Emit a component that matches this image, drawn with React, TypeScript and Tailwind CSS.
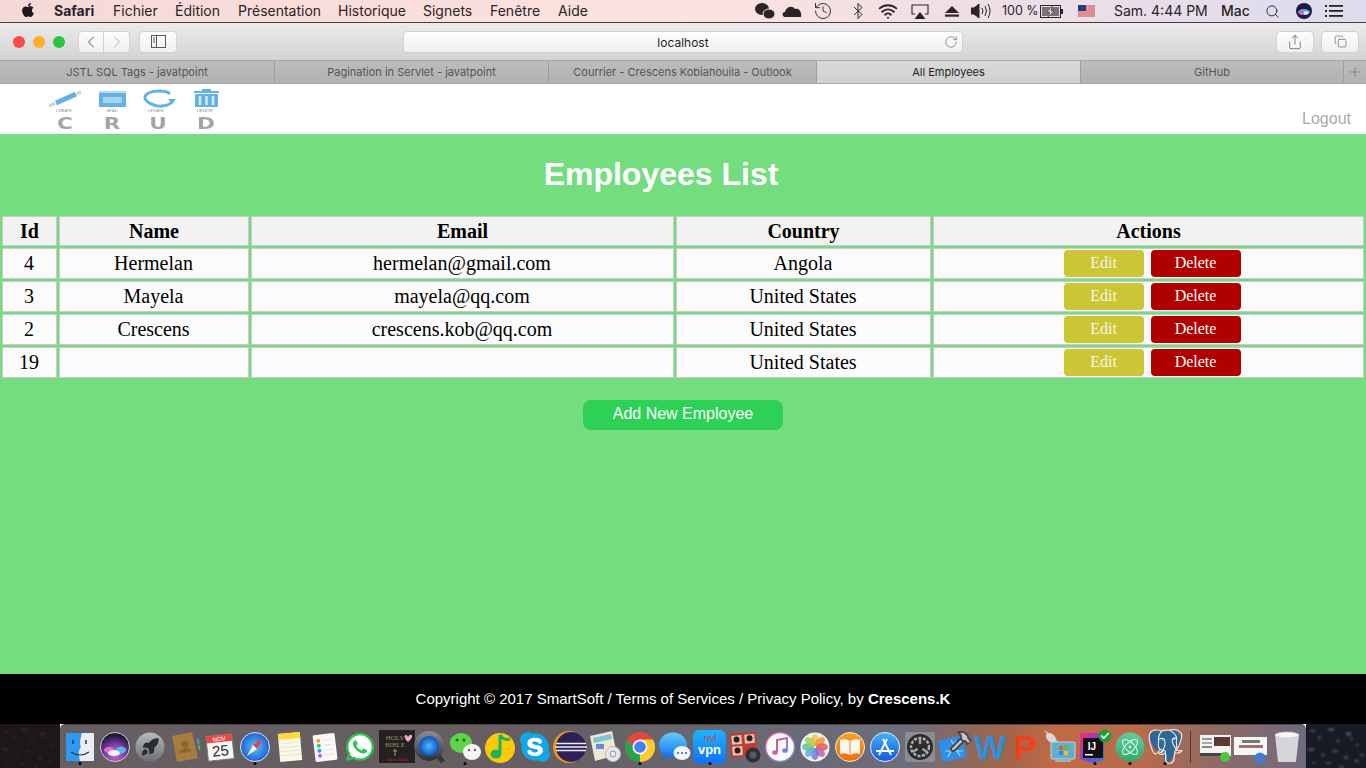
import React from "react";
import { FaApple, FaWhatsapp, FaSkype } from "react-icons/fa";
import { SiPostgresql } from "react-icons/si";
import { ChevronLeft, ChevronRight, RotateCw, Share, Copy, Plus, Search, Wifi, History, Check, Rocket, Hammer, Atom } from "lucide-react";

const menus: [string, string][] = [
  ["Safari", "w-[59px] font-bold"],
  ["Fichier", "w-[62px]"],
  ["Édition", "w-[63px]"],
  ["Présentation", "w-[100px]"],
  ["Historique", "w-[85px]"],
  ["Signets", "w-[67px]"],
  ["Fenêtre", "w-[68px]"],
  ["Aide", "w-[40px]"],
];

const tabs: [string, string, boolean][] = [
  ["JSTL SQL Tags - javatpoint", "w-[275px]", false],
  ["Pagination in Servlet - javatpoint", "w-[274px]", false],
  ["Courrier - Crescens Kobiahouila - Outlook", "w-[268px]", false],
  ["All Employees", "w-[264px]", true],
  ["GitHub", "w-[263px]", false],
];

const rows: [string, string, string, string][] = [
  ["4", "Hermelan", "hermelan@gmail.com", "Angola"],
  ["3", "Mayela", "mayela@qq.com", "United States"],
  ["2", "Crescens", "crescens.kob@qq.com", "United States"],
  ["19", "", "", "United States"],
];

function Logo() {
  const blue = "#62b3e3";
  const letters: [string, number][] = [["C", 65], ["R", 112], ["U", 158], ["D", 206]];
  return (
    <svg width="180" height="50" viewBox="46 84 180 50" className="blur-[0.5px]">
      <path d="M56 103 L76 94" stroke={blue} strokeWidth="5" />
      <path d="M49 106 L55 103.500 M77 93.500 L81 92" stroke="#cfd3d6" strokeWidth="3.500" />
      <rect x="99" y="92" width="27" height="15" fill={blue} />
      <rect x="99" y="91" width="27" height="2" fill="#b8dcf2" />
      <rect x="103" y="97" width="19" height="6" fill="#a7d4ef" />
      <path d="M170 94 C166 90 150 90 146 95 C141 101 155 107 162 106 C168 105.500 172 103 173 100" fill="none" stroke={blue} strokeWidth="3" />
      <path d="M168 99 L176 99 L172 104 Z" fill={blue} />
      <rect x="194" y="91" width="25" height="2" fill={blue} />
      <rect x="202" y="89" width="9" height="2" fill={blue} />
      <path d="M195 94 H218 V107 H195 Z" fill={blue} />
      <path d="M200 96 V105 M206.500 96 V105 M213 96 V105" stroke="#d5ebf8" strokeWidth="2.500" />
      <g fontFamily="'Liberation Sans', sans-serif" fontSize="4" fill="#8a8a8a" textAnchor="middle">
        <text x="64" y="112">CREATE</text>
        <text x="112" y="112">READ</text>
        <text x="156" y="112">UPDATE</text>
        <text x="205" y="112">DELETE</text>
      </g>
      <g fontFamily="'DejaVu Sans', sans-serif" fontSize="16" fontWeight="700" fill="#a4a4a4" textAnchor="middle">
        {letters.map(([l, x]) => (
          <text key={l} transform={`translate(${x} 129) scale(1.35 1)`}>{l}</text>
        ))}
      </g>
    </svg>
  );
}

function MenuBar() {
  return (
    <div className="flex h-[22px] items-center bg-gradient-to-r from-[#f5d9d8] via-[#fbe2df] to-[#dddcee] pl-[21px] pr-[23px] text-[14px] leading-none text-[#2b2226] font-['Inter',sans-serif]">
      <FaApple className="mb-[2px] h-[16px] w-[14px] text-[#1c1719]" />
      <div className="ml-[19px] flex">
        {menus.map(([m, c]) => (
          <span key={m} className={c}>{m}</span>
        ))}
      </div>
      <div className="ml-auto flex items-center">
        <svg width="20" height="18" viewBox="0 0 20 18" fill="#2a2426">
          <ellipse cx="7" cy="7" rx="7" ry="6" />
          <ellipse cx="14" cy="12" rx="6" ry="5" stroke="#fbe0df" />
        </svg>
        <svg className="ml-[7px]" width="20" height="16" viewBox="0 0 20 14" fill="#2a2426">
          <path d="M3 13 C0 13 -0.500 8 3 8 C4 3 10 1 13 5 C17 4 20 8 19 13 Z" />
        </svg>
        <History className="ml-[11px] h-[20px] w-[20px] text-[#3a3336]" strokeWidth={1.200} />
        <svg className="ml-[20px]" width="10" height="18" viewBox="0 0 10 18" fill="none" stroke="#2a2426" strokeWidth="1">
          <path d="M1 5 L9 12.500 L5 16.500 V1.500 L9 5.500 L1 13" />
        </svg>
        <Wifi className="ml-[15px] h-[20px] w-[20px] text-[#2a2426]" strokeWidth={2.300} />
        <svg className="ml-[13px]" width="18" height="15" viewBox="0 0 18 15" fill="none">
          <path d="M4 10 H1 V1 H17 V10 H14" stroke="#2a2426" strokeWidth="1.100" />
          <path d="M3.500 15 L9 8 L14.500 15 Z" fill="#2a2426" />
        </svg>
        <svg className="ml-[16px]" width="14" height="12" viewBox="0 0 14 12" fill="#2a2426">
          <path d="M7 1 L14 8 H0 Z" />
          <rect y="9.500" width="14" height="2.200" />
        </svg>
        <svg className="ml-[12px]" width="21" height="16" viewBox="0 0 21 16" fill="none" stroke="#2a2426">
          <path d="M0 5 H3 L8 1 V15 L3 11 H0 Z" fill="#2a2426" />
          <path d="M11 5 Q13 8 11 11 M14 3 Q17 8 14 13 M17 1 Q21 8 17 15" />
        </svg>
        <span className="ml-[10px] w-[38px] whitespace-nowrap text-[12.500px]">100 %</span>
        <svg width="24" height="13" viewBox="0 0 24 13" fill="none">
          <rect x="0.500" y="0.500" width="20" height="12" stroke="#2a2426" />
          <rect x="21" y="4" width="2" height="5" fill="#2a2426" />
          <path d="M2 2 H19 V11 H2 Z" fill="#7a7274" />
          <path d="M12 1 L7 7 H10 L8 12 L14 6 H11 Z" fill="#fbe0df" stroke="#2a2426" strokeWidth="0.500" />
        </svg>
        <svg className="ml-[14px]" width="17" height="12" viewBox="0 0 17 12">
          <rect width="17" height="12" fill="#f4f0f0" />
          <path d="M0 1 H17 M0 3 H17 M0 5 H17 M0 7 H17 M0 9 H17 M0 11 H17" stroke="#c8283a" strokeWidth="1" />
          <rect width="8" height="6" fill="#2c3a7c" />
        </svg>
        <span className="ml-[19px] w-[107px]">Sam. 4:44 PM</span>
        <span className="w-[44px] font-medium">Mac</span>
        <Search className="h-[15px] w-[15px] text-[#2a2426]" strokeWidth={1.500} />
        <svg className="ml-[16px]" width="16" height="16" viewBox="0 0 16 16">
          <circle cx="8" cy="8" r="8" fill="#1e1a44" />
          <ellipse cx="8" cy="9" rx="6" ry="3" fill="#4fa8e8" />
          <ellipse cx="6" cy="10" rx="3" ry="2" fill="#d860c0" />
          <ellipse cx="10" cy="10" rx="2.500" ry="1.800" fill="#e6f4ff" />
        </svg>
        <svg className="ml-[13px]" width="18" height="12" viewBox="0 0 18 12" fill="#2a2426">
          <rect x="0" y="0" width="2" height="2" />
          <rect x="0" y="5" width="2" height="2" />
          <rect x="0" y="10" width="2" height="2" />
          <rect x="4" y="0" width="14" height="1.800" />
          <rect x="4" y="5" width="14" height="1.800" />
          <rect x="4" y="10" width="14" height="1.800" />
        </svg>
      </div>
    </div>
  );
}

function ToolBtn({ className, children }: { className: string; children: React.ReactNode }) {
  return (
    <div className={"flex h-[22px] items-center justify-center rounded-[4px] border border-[#d2d1d3] bg-gradient-to-b from-[#fdfdfd] to-[#f0f0f1] " + className}>
      {children}
    </div>
  );
}

function Toolbar() {
  return (
    <div className="flex h-[38px] items-center border-t border-[#57383a] bg-gradient-to-b from-[#ebebed] to-[#d3d2d5] pl-[13px] font-['Inter',sans-serif]">
      <div className="h-[12px] w-[12px] rounded-full bg-[#fc4a48]" />
      <div className="ml-[8px] h-[12px] w-[12px] rounded-full bg-[#fdb024]" />
      <div className="ml-[8px] h-[12px] w-[12px] rounded-full bg-[#29c33d]" />
      <div className="ml-[13px] flex">
        <ToolBtn className="w-[26px] rounded-r-none">
          <ChevronLeft className="h-[20px] w-[20px] text-[#5a5a5c]" strokeWidth={1.200} />
        </ToolBtn>
        <ToolBtn className="w-[26px] rounded-l-none border-l-0">
          <ChevronRight className="h-[20px] w-[20px] text-[#b5b5b7]" strokeWidth={1.200} />
        </ToolBtn>
      </div>
      <ToolBtn className="ml-[9px] w-[38px]">
        <svg width="15" height="13" viewBox="0 0 15 13" fill="none" stroke="#5a5a5c">
          <rect x="0.500" y="0.500" width="14" height="12" />
          <path d="M5.500 0.500 V12.500" />
          <path d="M2 3 H4 M2 5 H4 M2 7 H4" />
        </svg>
      </ToolBtn>
      <ToolBtn className="ml-[226px] w-[560px] relative">
        <span className="pt-[2px] text-[12px] leading-none text-[#1f1f1f]">localhost</span>
        <RotateCw className="absolute right-[4px] top-[3px] h-[14px] w-[14px] text-[#6e6e70]" strokeWidth={1.200} />
      </ToolBtn>
      <ToolBtn className="ml-[313px] w-[38px]">
        <Share className="h-[16px] w-[16px] text-[#5a5a5c]" strokeWidth={1.100} />
      </ToolBtn>
      <ToolBtn className="ml-[7px] w-[38px]">
        <Copy className="h-[13px] w-[13px] text-[#5a5a5c]" strokeWidth={1.200} />
      </ToolBtn>
    </div>
  );
}

function Tabs() {
  return (
    <div className="flex h-[24px] border-y border-y-[#a9a8a9] bg-gradient-to-b from-[#bdbcbd] to-[#b3b2b3] text-[11px] leading-none font-['Inter',sans-serif]">
      {tabs.map(([t, w, active]) => (
        <div
          key={t}
          className={
            "flex items-center justify-center border-r border-[#9f9e9f] " + w + " " +
            (active ? "bg-gradient-to-b from-[#d9d9d9] to-[#d0d0d0] text-[#222]" : "text-[#555]")
          }
        >
          {t}
        </div>
      ))}
      <div className="flex flex-1 items-center justify-center">
        <Plus className="h-[16px] w-[16px] text-[#6e6e6e]" strokeWidth={1} />
      </div>
    </div>
  );
}

function EmployeeTable() {
  const th = "h-[30px] border border-[#c9c9c9] bg-[#f2f2f2] text-[20px] font-bold p-0 leading-none text-black";
  const td = "h-[31px] border border-[#c9c9c9] bg-[#fbfbfb] text-[20px] pb-[2px] pr-[1px] text-center leading-none text-black";
  return (
    <table className="w-full table-fixed border-separate border-spacing-[2px] font-['Liberation_Serif',serif]">
      <colgroup>
        <col className="w-[55px]" />
        <col className="w-[190px]" />
        <col className="w-[423px]" />
        <col className="w-[255px]" />
        <col className="w-[431px]" />
      </colgroup>
      <thead>
        <tr>
          {["Id", "Name", "Email", "Country", "Actions"].map((h) => (
            <th key={h} className={th}>{h}</th>
          ))}
        </tr>
      </thead>
      <tbody>
        {rows.map((r) => (
          <tr key={r[0]}>
            {r.map((c, i) => (
              <td key={i} className={td}>{c}</td>
            ))}
            <td className="h-[31px] border border-[#c9c9c9] bg-[#fbfbfb] p-0 text-center leading-none">
              <div className="flex justify-center gap-[7px] pl-[8px] text-[16px] text-white">
                <span className="flex h-[27px] w-[80px] items-center justify-center rounded-[4px] bg-[#cbc636] pb-[2px] pr-[1px] text-[#f7f5e0]">Edit</span>
                <span className="flex h-[27px] w-[90px] items-center justify-center rounded-[4px] bg-[#b10000] pb-[2px] pr-[1px]">Delete</span>
              </div>
            </td>
          </tr>
        ))}
      </tbody>
    </table>
  );
}

/* ---------- dock icons ---------- */
const T = (p: React.SVGProps<SVGTextElement>) => <text fontFamily="'Liberation Sans', sans-serif" {...p} />;

const I = ({ children, defs }: { children: React.ReactNode; defs?: React.ReactNode }) => (
  <svg width="36" height="36" viewBox="0 0 36 36" className="overflow-visible">
    {defs && <defs>{defs}</defs>}
    {children}
  </svg>
);

const dockIcons: { k: string; dot?: boolean; el: React.ReactNode }[] = [
  { k: "finder", dot: true, el: (
    <I>
      <rect x="4" y="4" width="28" height="28" rx="1" fill="#2f9bf0" />
      <path d="M20 4 H31 a1 1 0 0 1 1 1 V31 a1 1 0 0 1 -1 1 H18 C16 24 17 20 19 18 C17 14 19 8 20 4 Z" fill="#e9eef3" />
      <path d="M11 11 V15 M24 11 V15" stroke="#20344c" strokeWidth="1.500" />
      <path d="M9 23 Q18 29 27 23" fill="none" stroke="#20344c" strokeWidth="1.200" />
    </I>
  )},
  { k: "siri", el: (
    <I defs={<radialGradient id="sr" cx="50%" cy="75%" r="70%"><stop offset="0" stopColor="#d86fc8" /><stop offset="0.5" stopColor="#7a3ca8" /><stop offset="1" stopColor="#15132c" /></radialGradient>}>
      <circle cx="18" cy="18" r="14.500" fill="url(#sr)" stroke="#d4d1d6" />
      <ellipse cx="12" cy="21" rx="5" ry="3" fill="#e86cc4" />
      <ellipse cx="24" cy="21" rx="5" ry="3.500" fill="#56b6ee" />
      <ellipse cx="17" cy="24" rx="6" ry="3" fill="#eef6fc" />
    </I>
  )},
  { k: "launchpad", el: (
    <I defs={<linearGradient id="lp" x1="0" y1="0" x2="0" y2="1"><stop offset="0" stopColor="#b4b9bc" /><stop offset="1" stopColor="#6c7175" /></linearGradient>}>
      <circle cx="18" cy="18" r="14.500" fill="url(#lp)" />
      <g transform="translate(8.500 8.500)"><Rocket width="19" height="19" fill="#2a2e31" stroke="#2a2e31" /></g>
    </I>
  )},
  { k: "contacts", el: (
    <I>
      <path d="M5 7 L25 3 L31 29 L10 33 Z" fill="#a87c3f" />
      <rect x="30" y="10" width="2" height="5" fill="#3fa0d8" transform="rotate(-12 31 12)" />
      <rect x="31" y="16" width="2" height="5" fill="#54b060" transform="rotate(-12 32 18)" />
      <circle cx="18" cy="15" r="3.500" fill="#8d6530" />
      <path d="M11 25 Q18 15 25 22" fill="#8d6530" />
    </I>
  )},
  { k: "calendar", el: (
    <I>
      <g transform="rotate(-6 18 18)">
        <rect x="5" y="6" width="26" height="25" fill="#f7f7f7" stroke="#777" />
        <rect x="5" y="6" width="26" height="7" fill="#e84a48" />
        <T x="18" y="12" fontSize="6" fill="#fff" textAnchor="middle">NOV</T>
        <T x="18" y="27" fontSize="15" fill="#2a2a2a" textAnchor="middle">25</T>
      </g>
    </I>
  )},
  { k: "safari", dot: true, el: (
    <I defs={<radialGradient id="sf"><stop offset="0" stopColor="#5fc0f7" /><stop offset="1" stopColor="#1c62d6" /></radialGradient>}>
      <circle cx="18" cy="18" r="14.500" fill="url(#sf)" stroke="#dfe3e8" />
      <path d="M26 9 L16 16 L20 20 Z" fill="#f0403a" />
      <path d="M10 27 L16 16 L20 20 Z" fill="#f4f4f4" />
    </I>
  )},
  { k: "notes", el: (
    <I>
      <g transform="rotate(-5 18 18)">
        <rect x="7" y="4" width="22" height="28" fill="#fbf8e8" />
        <rect x="7" y="4" width="22" height="6" fill="#fadb3c" />
        <path d="M7 14 H29 M7 18 H29 M7 22 H29 M7 26 H29" stroke="#e2dfc8" strokeWidth="0.700" />
      </g>
    </I>
  )},
  { k: "reminders", el: (
    <I>
      <g transform="rotate(-7 18 18)">
        <rect x="7" y="5" width="22" height="27" rx="1.500" fill="#f8f8f8" />
        <circle cx="12" cy="11" r="2" fill="#f5953a" />
        <circle cx="12" cy="16" r="2" fill="#32cf56" />
        <circle cx="12" cy="21" r="2" fill="#2a9cf0" />
        <circle cx="12" cy="26" r="2" fill="#c95ae0" />
        <path d="M16 11 H26 M16 16 H26 M16 21 H26 M16 26 H26" stroke="#dcdcdc" strokeWidth="0.700" />
      </g>
    </I>
  )},
  { k: "whatsapp", el: (
    <I>
      <circle cx="18" cy="17.500" r="13" fill="#fff" />
      <g transform="translate(2 2)"><FaWhatsapp size={32} color="#2fc34f" /></g>
    </I>
  )},
  { k: "bible", el: (
    <I>
      <g transform="translate(2 0)">
        <rect x="0" y="1" width="36" height="33" fill="#242122" />
        <text x="16" y="11" fontSize="7" fill="#9a8a60" textAnchor="middle" fontFamily="'Liberation Serif', serif">HOLY</text>
        <text x="16" y="18" fontSize="7" fill="#9a8a60" textAnchor="middle" fontFamily="'Liberation Serif', serif">BIBLE</text>
        <path d="M16 20 V27 M14 22 H18" stroke="#a89560" strokeWidth="1" />
        <text x="18" y="32" fontSize="4.500" fill="#c81c1c" textAnchor="middle" fontFamily="'Liberation Serif', serif">Sainte Bible</text>
        <path d="M29 8 C27 4 24 7 27 11 L29 13 L32 10 C35 6 31 4 29 8 Z" fill="#f2a8c8" />
      </g>
    </I>
  )},
  { k: "quicktime", el: (
    <I defs={<>
      <radialGradient id="qt"><stop offset="0" stopColor="#48bcfa" /><stop offset="1" stopColor="#1250c0" /></radialGradient>
      <linearGradient id="qr" x1="0" y1="0" x2="0" y2="1"><stop offset="0" stopColor="#8a9099" /><stop offset="1" stopColor="#2c3036" /></linearGradient>
    </>}>
      <path d="M22 22 L31 33" stroke="#33373d" strokeWidth="5" />
      <circle cx="17" cy="17" r="15" fill="url(#qr)" />
      <circle cx="17" cy="17" r="10" fill="url(#qt)" />
    </I>
  )},
  { k: "wechat", dot: true, el: (
    <I>
      <ellipse cx="14" cy="14" rx="11" ry="10" fill="#5fd34a" />
      <circle cx="10" cy="11" r="1.500" fill="#27631c" />
      <circle cx="17" cy="11" r="1.500" fill="#27631c" />
      <ellipse cx="25" cy="23" rx="9" ry="8" fill="#f4f4f4" />
      <circle cx="22" cy="21" r="1.200" fill="#666" />
      <circle cx="28" cy="21" r="1.200" fill="#666" />
    </I>
  )},
  { k: "qqmusic", el: (
    <I>
      <circle cx="18" cy="19" r="15" fill="#fbc908" />
      <path d="M18 6 V24" stroke="#1fb45c" strokeWidth="3" />
      <ellipse cx="14" cy="25" rx="5.500" ry="4.500" fill="#1fb45c" />
      <path d="M18 6 Q22 12 28 10" fill="none" stroke="#1fb45c" strokeWidth="3" />
    </I>
  )},
  { k: "skype", el: (
    <I>
      <circle cx="18" cy="18" r="11" fill="#fff" />
      <g transform="translate(1 1)"><FaSkype size={34} color="#11a6e4" /></g>
    </I>
  )},
  { k: "eclipse", el: (
    <I>
      <circle cx="17" cy="18" r="16" fill="#e8941c" />
      <circle cx="19" cy="18" r="15" fill="#2c2158" />
      <path d="M4 14.500 H34 M3 18 H35 M4 21.500 H34" stroke="#f0eef8" strokeWidth="1.500" />
    </I>
  )},
  { k: "maps", el: (
    <I>
      <path d="M3 7 L25 2 L30 26 L8 32 Z" fill="#ece6d2" />
      <path d="M6 9 L24 5 L25 10 L7 14 Z" fill="#7cc4d8" />
      <rect x="9" y="15" width="8" height="5" fill="#5d8fdf" />
      <circle cx="26" cy="25" r="7.500" fill="#e8e8ea" stroke="#bbb" />
      <circle cx="26" cy="25" r="3" fill="none" stroke="#999" />
    </I>
  )},
  { k: "chrome", dot: true, el: (
    <I>
      <circle cx="18" cy="18" r="15" fill="#de4a3c" />
      <path d="M18 18 L5 25.500 A15 15 0 0 0 18 33 Z" fill="#2ba24c" />
      <path d="M18 18 L18 33 A15 15 0 0 0 31 10.500 L18 10.500 Z" fill="#fbcb2e" />
      <path d="M18 18 L5 25.500 A15 15 0 0 1 5 10.500 L12 18 Z" fill="#2ba24c" />
      <circle cx="18" cy="18" r="7.500" fill="#f5f5f5" />
      <circle cx="18" cy="18" r="5.800" fill="#4a7ff0" />
    </I>
  )},
  { k: "messages", el: (
    <I defs={<linearGradient id="ms" x1="0" y1="0" x2="0" y2="1"><stop offset="0" stopColor="#62cdf9" /><stop offset="1" stopColor="#1672f0" /></linearGradient>}>
      <ellipse cx="16" cy="16" rx="14" ry="12.500" fill="url(#ms)" />
      <path d="M8 24 L5 31 L14 27 Z" fill="#1672f0" />
      <ellipse cx="25" cy="24" rx="8.500" ry="7" fill="#f2f4f8" />
      <circle cx="21" cy="24" r="1.100" fill="#3a6ea8" />
      <circle cx="25" cy="24" r="1.100" fill="#3a6ea8" />
      <circle cx="29" cy="24" r="1.100" fill="#3a6ea8" />
    </I>
  )},
  { k: "vpn", dot: true, el: (
    <I defs={<linearGradient id="vp" x1="0" y1="0" x2="0" y2="1"><stop offset="0" stopColor="#1eb4fa" /><stop offset="1" stopColor="#1470f5" /></linearGradient>}>
      <rect x="1" y="1" width="33" height="34" rx="6" fill="url(#vp)" />
      <text x="18" y="12" fontSize="10" fill="#d8394a" textAnchor="middle" fontStyle="italic" fontFamily="'Liberation Serif', serif">red</text>
      <T x="17.500" y="25" fontSize="13" fontWeight="700" fill="#fff" textAnchor="middle">vpn</T>
    </I>
  )},
  { k: "photobooth", el: (
    <I>
      <g transform="rotate(-5 15 15)">
        <rect x="3" y="4" width="27" height="24" fill="#c33a34" />
        <rect x="5" y="6" width="10" height="9" fill="#dcc6b8" />
        <rect x="18" y="6" width="10" height="9" fill="#dcc6b8" />
        <rect x="5" y="17" width="10" height="9" fill="#dcc6b8" />
        <circle cx="10" cy="10" r="3" fill="#2a2020" />
        <circle cx="23" cy="10" r="3" fill="#2a2020" />
        <circle cx="10" cy="21" r="3" fill="#2a2020" />
      </g>
      <circle cx="26" cy="26" r="7.500" fill="#2e2e34" />
      <circle cx="26" cy="26" r="3.500" fill="#545a66" />
    </I>
  )},
  { k: "itunes", el: (
    <I defs={<linearGradient id="it" x1="0" y1="0" x2="1" y2="1"><stop offset="0" stopColor="#f04a78" /><stop offset="1" stopColor="#5fa0f5" /></linearGradient>}>
      <circle cx="18" cy="18" r="14.500" fill="#fbf9fb" stroke="url(#it)" strokeWidth="1.500" />
      <path d="M15 23 V11 L25 9 V21" fill="none" stroke="url(#it)" strokeWidth="2" />
      <ellipse cx="13" cy="23.500" rx="2.800" ry="2.300" fill="#d85aa8" />
      <ellipse cx="23" cy="21.500" rx="2.800" ry="2.300" fill="#8a78dc" />
    </I>
  )},
  { k: "photos", el: (
    <I>
      <circle cx="18" cy="18" r="14.500" fill="#f2f2f2" />
      {["#f6c343", "#f39433", "#ea5a58", "#c65fb0", "#7f73d8", "#5cb0e0", "#5cc6a0", "#a5d052"].map((c, i) => (
        <ellipse key={c} cx="18" cy="11" rx="3.800" ry="6" fill={c} fillOpacity="0.850" transform={`rotate(${i * 45} 18 18)`} />
      ))}
    </I>
  )},
  { k: "ibooks", el: (
    <I defs={<linearGradient id="ib" x1="0" y1="0" x2="0" y2="1"><stop offset="0" stopColor="#fba51e" /><stop offset="1" stopColor="#ee6a0c" /></linearGradient>}>
      <circle cx="18" cy="18" r="14.500" fill="url(#ib)" stroke="#eee" />
      <path d="M18 12 Q13 9 8 11 V25 Q13 23 18 26 Q23 23 28 25 V11 Q23 9 18 12 Z" fill="#fdf6ec" />
      <path d="M18 12 V26" stroke="#e08a30" />
    </I>
  )},
  { k: "appstore", el: (
    <I defs={<linearGradient id="ap" x1="0" y1="0" x2="0" y2="1"><stop offset="0" stopColor="#3fb4f8" /><stop offset="1" stopColor="#1456e0" /></linearGradient>}>
      <circle cx="18" cy="18" r="14.500" fill="url(#ap)" stroke="#eee" />
      <path d="M12 26 L20 10 M24 26 L16 10 M9 22 H27" stroke="#fff" strokeWidth="1.800" fill="none" />
    </I>
  )},
  { k: "prefs", el: (
    <I>
      <rect x="3" y="3" width="30" height="30" rx="2" fill="#8c8d8e" />
      <circle cx="18" cy="18" r="13" fill="#2c2c2e" />
      <circle cx="18" cy="18" r="9" fill="none" stroke="#b0b0b2" strokeWidth="2.500" strokeDasharray="3 1.500" />
      <path d="M18 18 V10 M18 18 L11 23 M18 18 L25 23" stroke="#a0a0a2" strokeWidth="2.500" />
      <circle cx="18" cy="18" r="3" fill="#2c2c2e" />
    </I>
  )},
  { k: "xcode", el: (
    <I>
      <path d="M1 12 L25 6 L30 28 L6 33 Z" fill="#2f8fe8" />
      <path d="M11 28 L19 12 M23 27 L14 11 M8 22 H26" stroke="#a9d5fa" strokeWidth="1.200" />
      <g transform="translate(12 0) scale(1.100)"><Hammer width="22" height="22" stroke="#4a4a4c" fill="#c8c8ca" strokeWidth="2" /></g>
    </I>
  )},
  { k: "word", el: (
    <I>
      <T x="18" y="30" fontSize="34" fontWeight="700" fill="#2f90d8" textAnchor="middle">W</T>
    </I>
  )},
  { k: "ppt", el: (
    <I>
      <T x="18" y="30" fontSize="34" fontWeight="700" fill="#f0401c" textAnchor="middle">P</T>
    </I>
  )},
  { k: "remote", el: (
    <I>
      <path d="M3 2 L17 14" stroke="#c8c8c8" strokeWidth="1.500" />
      <ellipse cx="9" cy="9" rx="4" ry="6" fill="#d8d8d8" transform="rotate(-45 9 9)" />
      <rect x="9" y="13" width="24" height="17" rx="1" fill="#5fb0d0" stroke="#c9d2d6" />
      <rect x="17" y="17" width="4" height="4" fill="#e85a30" />
      <rect x="22" y="17" width="4" height="4" fill="#6cb83a" />
      <rect x="17" y="22" width="4" height="4" fill="#3a80e0" />
      <rect x="22" y="22" width="4" height="4" fill="#f4c020" />
      <rect x="13" y="30" width="16" height="3" fill="#a9adaf" />
    </I>
  )},
  { k: "idea", dot: true, el: (
    <I defs={<linearGradient id="ij" x1="0" y1="0" x2="1" y2="1"><stop offset="0" stopColor="#fa2a72" /><stop offset="0.500" stopColor="#8a3de0" /><stop offset="1" stopColor="#1e82e8" /></linearGradient>}>
      <path d="M3 4 H27 V31 L14 34 L3 30 Z" fill="url(#ij)" />
      <rect x="6" y="9" width="20" height="20" fill="#111" />
      <T x="15" y="21" fontSize="10" fontWeight="700" fill="#fff" textAnchor="middle">IJ</T>
      <rect x="8" y="25" width="8" height="1.500" fill="#fff" />
      <circle cx="28" cy="7" r="6.500" fill="#1f9e3c" />
      <g transform="translate(23 2)"><Check width="10" height="10" stroke="#fff" strokeWidth="4" /></g>
    </I>
  )},
  { k: "atom", dot: true, el: (
    <I defs={<linearGradient id="at" x1="0" y1="0" x2="0" y2="1"><stop offset="0" stopColor="#62cc9c" /><stop offset="1" stopColor="#2faa70" /></linearGradient>}>
      <circle cx="18" cy="18" r="14.500" fill="url(#at)" />
      <g transform="translate(8 8)"><Atom width="20" height="20" stroke="#e2f7ec" strokeWidth="1.300" /></g>
    </I>
  )},
  { k: "pg", dot: true, el: (
    <I>
      <path d="M4 4 C10 -1 15 2 18 3 C22 1 31 0 33 6 C35 12 31 18 28 20 C27 26 25 33 19 34 C17 30 17 25 15 22 C11 23 7 20 5 15 C3 11 2 7 4 4 Z" fill="#2f6795" />
      <g transform="translate(1 0)"><SiPostgresql size={35} color="#eef2f5" /></g>
    </I>
  )},
];

const dockRight: { k: string; el: React.ReactNode }[] = [
  { k: "thumb1", el: (
    <I>
      <rect x="1" y="6" width="31" height="21" fill="#f2f2f2" />
      <rect x="15" y="8" width="16" height="9" fill="#5a3a2c" />
      <rect x="3" y="9" width="10" height="2" fill="#999" />
      <rect x="3" y="13" width="10" height="2" fill="#aaa" />
      <rect x="3" y="17" width="10" height="2" fill="#888" />
      <rect x="1" y="24" width="24" height="3" fill="#444" />
      <circle cx="26" cy="28" r="5" fill="#52c43c" />
    </I>
  )},
  { k: "thumb2", el: (
    <I>
      <rect x="0" y="8" width="33" height="18" fill="#f6f6f6" />
      <rect x="8" y="11" width="18" height="3" fill="#777" />
      <rect x="5" y="16" width="24" height="3" fill="#a86a6a" />
      <circle cx="26" cy="29" r="5.500" fill="#2c86e8" />
      <path d="M29 26 L24 29 L26 31 Z" fill="#f0403a" />
    </I>
  )},
  { k: "trash", el: (
    <I>
      <path d="M6 6 H30 L27 33 H9 Z" fill="#e7e8ea" fillOpacity="0.850" />
      <ellipse cx="18" cy="6" rx="12" ry="3" fill="#f6f6f7" stroke="#c7c7ca" strokeWidth="0.600" />
    </I>
  )},
];

function DockSlot({ dot, children }: { dot?: boolean; children: React.ReactNode }) {
  return (
    <div className="relative flex h-full w-[35px] shrink-0 justify-center pt-[4px]">
      <div className="h-[36px] w-[36px] shrink-0">{children}</div>
      {dot && <div className="absolute bottom-[3px] left-1/2 h-[3px] w-[3px] -translate-x-1/2 rounded-full bg-black" />}
    </div>
  );
}

const speckles: [number, number, number, number][] = [
  [4, 6, 5, 2], [12, 12, 3, 3], [22, 4, 6, 3], [30, 16, 4, 2], [40, 8, 5, 4], [50, 20, 3, 2],
  [2, 24, 6, 3], [15, 30, 4, 2], [26, 26, 6, 2], [38, 32, 4, 3], [48, 36, 5, 2], [6, 38, 3, 2],
  [20, 38, 5, 2], [33, 42, 5, 2], [44, 14, 3, 2], [54, 30, 4, 2],
];

function Rock({ light }: { light: string }) {
  return (
    <svg width="60" height="44" viewBox="0 0 60 44" className="blur-[0.8px]">
      {speckles.map(([x, y, w, h]) => (
        <rect key={`${x}-${y}`} x={x} y={y} width={w} height={h} rx="1" fill={light} />
      ))}
    </svg>
  );
}

function Dock() {
  return (
    <div className="flex h-[44px] overflow-hidden">
      <div className="w-[60px] shrink-0 bg-[#1d1818]">
        <Rock light="#2e2727" />
      </div>
      <div className="flex h-full w-[1246px] shrink-0 rounded-t-[5px] border-t border-[#4d474a] bg-[linear-gradient(90deg,#665e60_0,#665e60_38%,#686874_55%,#6d6d7b_68%,#a2654a_76%,#c16a44_80%,#b76a4c_87%,#8c6a66_93%,#6e6b7e_100%)] pl-[2px]">
        {dockIcons.map((d) => (
          <DockSlot key={d.k} dot={d.dot}>{d.el}</DockSlot>
        ))}
        <div className="ml-[8px] mr-[8px] mt-[6px] h-[32px] w-px bg-[#4e3d3a]" />
        {dockRight.map((d) => (
          <DockSlot key={d.k}>{d.el}</DockSlot>
        ))}
      </div>
      <div className="flex-1 bg-[#191b24]">
        <Rock light="#4b505f" />
      </div>
    </div>
  );
}

export default function App() {
  return (
    <div className="flex h-[768px] w-[1366px] flex-col overflow-hidden bg-white font-['Liberation_Sans',sans-serif]">
      <MenuBar />
      <Toolbar />
      <Tabs />
      <header className="flex h-[50px] items-start justify-between bg-white">
        <div className="ml-[46px]">
          <Logo />
        </div>
        <a className="mr-[15px] mt-[25px] text-[16px] leading-5 text-[#aaaaaa]">Logout</a>
      </header>
      <main className="flex h-[540px] flex-col bg-[#74dd80]">
        <h1 className="flex h-[80px] items-center justify-center pr-[44px] text-[32px] font-bold text-white">Employees List</h1>
        <EmployeeTable />
        <div className="mt-[20px] flex justify-center">
          <span className="flex h-[30px] w-[200px] items-center justify-center rounded-[8px] bg-[#2dd155] pb-[2px] text-[16px] text-white">Add New Employee</span>
        </div>
      </main>
      <footer className="flex h-[50px] items-center justify-center bg-black text-[15px] text-white">
        <span>
          Copyright © 2017 SmartSoft / Terms of Services / Privacy Policy, by <strong className="font-bold">Crescens.K</strong>
        </span>
      </footer>
      <Dock />
    </div>
  );
}
